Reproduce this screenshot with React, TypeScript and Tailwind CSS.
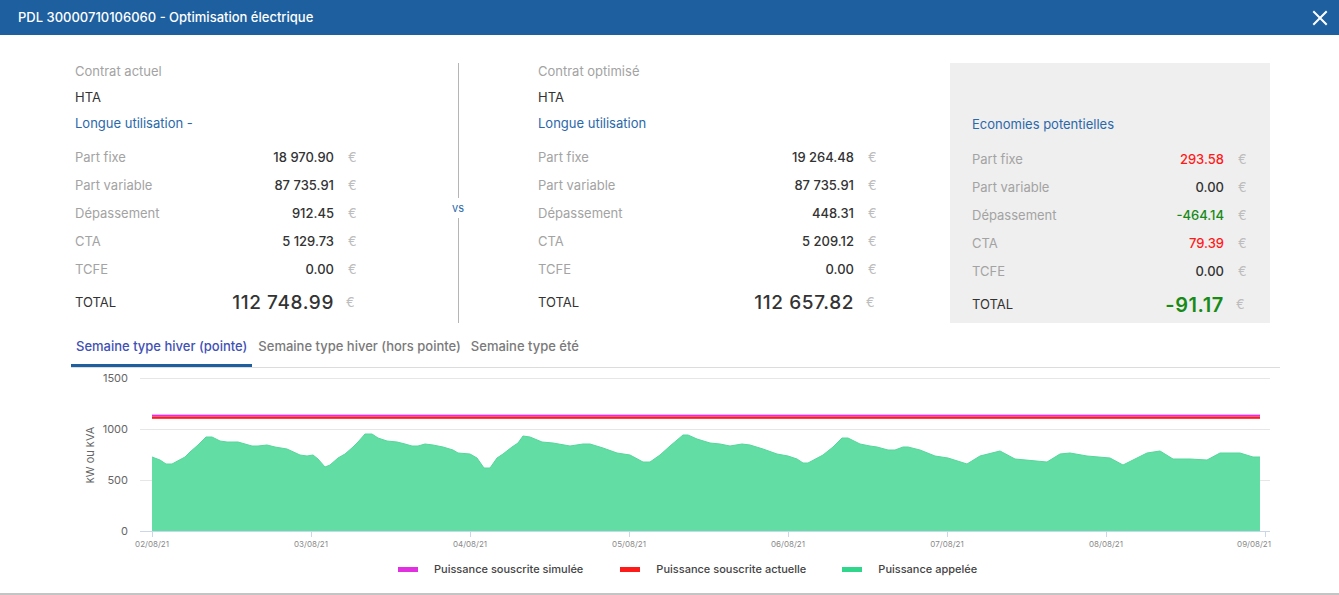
import React from "react";

const pts: [number, number][] = [
  [152, 457], [160, 460], [166, 464], [172, 464], [185, 457], [190, 452], [198, 445], [206, 437], [212, 437], [220, 441], [227, 442], [238, 442], [245, 444], [252, 446], [258, 446], [267, 445], [275, 447], [287, 449], [300, 455], [307, 456], [313, 455], [318, 459], [325, 467], [330, 465], [338, 458], [345, 454], [353, 447], [358, 442], [365, 434], [372, 434], [378, 438], [387, 441], [397, 442], [405, 444], [412, 446], [418, 446], [425, 444], [433, 445], [443, 447], [453, 450], [458, 453], [470, 454], [477, 458], [484, 468], [490, 468], [497, 458], [503, 454], [512, 447], [518, 443], [523, 436], [530, 437], [542, 442], [553, 443], [570, 446], [583, 444], [590, 444], [603, 448], [617, 453], [630, 455], [643, 462], [650, 462], [660, 455], [670, 446], [683, 435], [688, 435], [697, 439], [710, 443], [720, 444], [730, 446], [742, 444], [750, 445], [763, 449], [777, 454], [788, 456], [797, 459], [803, 463], [808, 463], [823, 455], [833, 447], [842, 438], [848, 438], [860, 444], [870, 446], [877, 447], [888, 450], [895, 450], [903, 447], [908, 447], [920, 450], [935, 456], [948, 458], [967, 464], [980, 456], [1000, 451], [1015, 459], [1047, 462], [1060, 454], [1070, 453], [1087, 456], [1110, 458], [1123, 465], [1147, 453], [1160, 451], [1173, 459], [1190, 459], [1207, 460], [1220, 453], [1240, 453], [1253, 457], [1260, 457],
];

const areaPath =
  "M152,531 " + pts.map(([x, y]) => `L${x},${y}`).join(" ") + " L1260,531 Z";
const topPath = "M" + pts.map(([x, y]) => `${x},${y}`).join(" L");

const dates = ["02/08/21", "03/08/21", "04/08/21", "05/08/21", "06/08/21", "07/08/21", "08/08/21", "09/08/21"];

type RowProps = { label: string; value: string; valueClass?: string };

function Row({ label, value, valueClass = "text-[#333333]" }: RowProps) {
  return (
    <div className="flex items-center h-[28px]">
      <span className="flex-1 text-[13px] text-[#a3a3a3]">{label}</span>
      <span className={"text-[13px] font-medium " + valueClass}>{value}</span>
      <span className="w-[12px] ml-[14px] text-[13px] text-[#bdbdbd]">€</span>
    </div>
  );
}

function TotalRow({ value, valueClass }: { value: string; valueClass: string }) {
  return (
    <div className="flex items-center h-[38px]">
      <span className="flex-1 text-[13px] text-[#333333]">TOTAL</span>
      <span className={valueClass}>{value}</span>
      <span className="w-[12px] ml-[12px] mr-[2px] text-[13px] text-[#bdbdbd]">€</span>
    </div>
  );
}

function Contract({
  title,
  sub,
  rows,
  total,
}: {
  title: string;
  sub: string;
  rows: RowProps[];
  total: string;
}) {
  return (
    <div className="flex flex-col">
      <div className="h-[26px] flex items-center text-[13px] text-[#a3a3a3]">{title}</div>
      <div className="h-[26px] flex items-center text-[13px] text-[#333333]">HTA</div>
      <div className="h-[26px] flex items-center text-[13px] text-[#2b68aa]">{sub}</div>
      <div className="mt-[7px]">
        {rows.map((r) => (
          <Row key={r.label} {...r} />
        ))}
      </div>
      <TotalRow
        value={total}
        valueClass="text-[19px] font-medium tracking-[0.6px] text-[#333333]"
      />
    </div>
  );
}

export default function App() {
  return (
    <div className="w-[1339px] h-[595px] bg-white font-[Inter,sans-serif] overflow-hidden relative">
      {/* Header */}
      <div className="h-[35px] bg-[#1e5fa0] flex items-center justify-between pl-[18px] pr-[10px]">
        <span className="text-white text-[13px] font-medium">
          PDL 30000710106060 - Optimisation électrique
        </span>
        <svg width="16" height="16" viewBox="0 0 16 16" className="mr-[1px]">
          <path d="M2 2 L14 14 M14 2 L2 14" stroke="white" strokeWidth="2" strokeLinecap="square" />
        </svg>
      </div>

      {/* Top section */}
      <div className="flex items-start mt-[24px] pl-[75px]">
        <div className="w-[285px]">
          <Contract
            title="Contrat actuel"
            sub="Longue utilisation -"
            rows={[
              { label: "Part fixe", value: "18 970.90" },
              { label: "Part variable", value: "87 735.91" },
              { label: "Dépassement", value: "912.45" },
              { label: "CTA", value: "5 129.73" },
              { label: "TCFE", value: "0.00" },
            ]}
            total="112 748.99"
          />
        </div>

        <div className="w-[20px] ml-[88px] mr-[70px] mt-[4px] h-[260px] flex flex-col items-center">
          <div className="w-px h-[135px] bg-[#b5b5b5]" />
          <div className="h-[20px] flex items-center text-[11px] text-[#2b68aa]">vs</div>
          <div className="w-px flex-1 bg-[#b5b5b5]" />
        </div>

        <div className="w-[342px]">
          <Contract
            title="Contrat optimisé"
            sub="Longue utilisation"
            rows={[
              { label: "Part fixe", value: "19 264.48" },
              { label: "Part variable", value: "87 735.91" },
              { label: "Dépassement", value: "448.31" },
              { label: "CTA", value: "5 209.12" },
              { label: "TCFE", value: "0.00" },
            ]}
            total="112 657.82"
          />
        </div>

        <div className="ml-[70px] mt-[4px] w-[320px] h-[260px] bg-[#efefef] pl-[22px] pr-[20px] pt-[49px]">
          <div className="h-[26px] flex items-center text-[13px] text-[#2b68aa]">Economies potentielles</div>
          <div className="mt-[8px]">
            <Row label="Part fixe" value="293.58" valueClass="text-[#ff1a1a]" />
            <Row label="Part variable" value="0.00" />
            <Row label="Dépassement" value="-464.14" valueClass="text-[#178a17]" />
            <Row label="CTA" value="79.39" valueClass="text-[#ff1a1a]" />
            <Row label="TCFE" value="0.00" />
          </div>
          <TotalRow value="-91.17" valueClass="text-[20px] font-semibold tracking-[0.6px] text-[#178a17]" />
        </div>
      </div>

      {/* Tabs */}
      <div className="ml-[71px] w-[1209px] mt-[3px] flex border-b border-[#dcdcdc]">
        <div className="h-[41px] px-[5px] flex items-center text-[13px] font-medium text-[#3f51b5] shadow-[inset_0_-3px_0_#1e5fa0]">
          Semaine type hiver (pointe)
        </div>
        <div className="h-[41px] px-[6px] flex items-center text-[13px] font-medium text-[#7a7a7a]">
          Semaine type hiver (hors pointe)
        </div>
        <div className="h-[41px] px-[4px] flex items-center text-[13px] font-medium text-[#7a7a7a]">
          Semaine type été
        </div>
      </div>

      {/* Chart */}
      <svg width="1339" height="187" viewBox="0 368 1339 187" className="block" fontFamily="Inter, sans-serif">
        {[378, 429, 480].map((y) => (
          <line key={y} x1="140" x2="1270" y1={y + 0.5} y2={y + 0.5} stroke="#e6e6e6" strokeWidth="1" />
        ))}
        {[
          ["1500", 378],
          ["1000", 429],
          ["500", 480],
          ["0", 531],
        ].map(([t, y]) => (
          <text key={t as string} x="128" y={(y as number) + 4} textAnchor="end" fontSize="11" fill="#666666">
            {t}
          </text>
        ))}
        <text
          x="0"
          y="0"
          transform="translate(94 455) rotate(-90)"
          textAnchor="middle"
          fontSize="11"
          fill="#666666"
        >
          kW ou kVA
        </text>
        <path d={areaPath} fill="#62dea5" />
        <path d={topPath} fill="none" stroke="#55d69b" strokeWidth="1" />
        <line x1="140" x2="1270" y1="531.5" y2="531.5" stroke="#ccd6eb" strokeWidth="1" />
        {dates.map((d, i) => {
          const x = 152 + 159 * i;
          return (
            <g key={d}>
              <line x1={x + 0.5} x2={x + 0.5} y1="531" y2="537" stroke="#ccd6eb" strokeWidth="1" />
              <text
                x={i === 7 ? 1271 : x}
                y="547"
                textAnchor={i === 7 ? "end" : "middle"}
                fontSize="8"
                fill="#8a8a8a"
              >
                {d}
              </text>
            </g>
          );
        })}
        <rect x="152" y="414.6" width="1108" height="2" fill="#e030e0" />
        <rect x="152" y="416.6" width="1108" height="2.2" fill="#ff1a1a" />
      </svg>

      {/* Legend */}
      <div className="flex items-center h-[28px] pl-[398px]">
        <span className="w-[20px] h-[5px] bg-[#e030e0]" />
        <span className="ml-[16px] text-[11px] font-medium text-[#444444]">Puissance souscrite simulée</span>
        <span className="ml-[37px] w-[20px] h-[5px] bg-[#ff1a1a]" />
        <span className="ml-[16px] text-[11px] font-medium text-[#444444]">Puissance souscrite actuelle</span>
        <span className="ml-[36px] w-[20px] h-[5px] bg-[#2fd68b]" />
        <span className="ml-[16px] text-[11px] font-medium text-[#444444]">Puissance appelée</span>
      </div>

      <div className="absolute left-0 right-0 bottom-0 h-[2px] bg-[#c4c4c4]" />
    </div>
  );
}
